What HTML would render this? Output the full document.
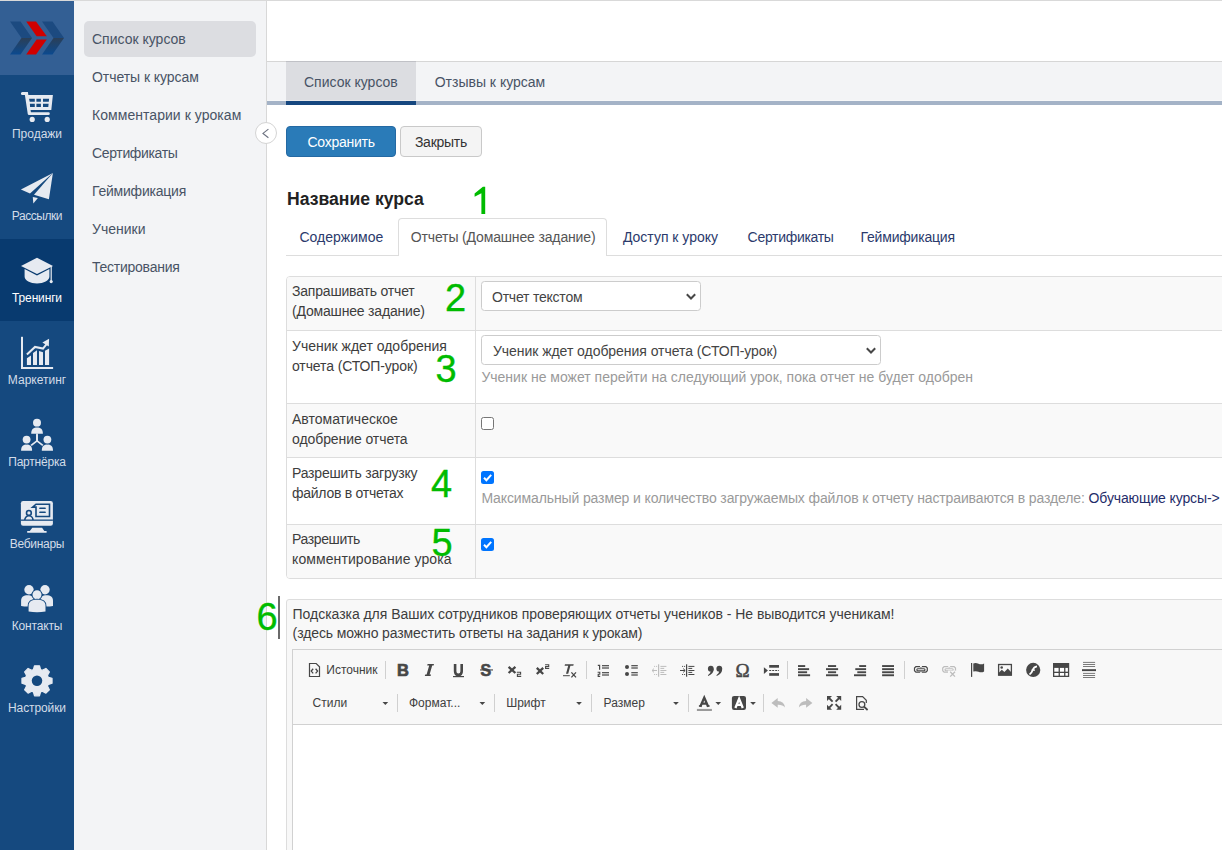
<!DOCTYPE html>
<html><head><meta charset="utf-8">
<style>
*{box-sizing:border-box;margin:0;padding:0}
html,body{width:1222px;height:850px;overflow:hidden;background:#fff;font-family:"Liberation Sans",sans-serif;color:#333}
.a{position:absolute;white-space:nowrap;line-height:1}
#topline{position:absolute;left:0;top:0;width:1222px;height:1px;background:#d9d9d9}
#side{position:absolute;left:0;top:1px;width:74px;height:849px;background:#15497f}
#logo{position:absolute;left:0;top:0;width:74px;height:74px;background:#335f94}
.si{position:absolute;left:0;width:74px;height:82px}
.si.act{background:#083a6f}
.si svg{position:absolute;left:0;top:0}
.si .t{position:absolute;left:0;width:74px;text-align:center;font-size:12px;line-height:12px;top:53px;color:#d3dce8}
.si.act .t{color:#fff}
#sub{position:absolute;left:74px;top:1px;width:193px;height:849px;background:#f3f4f6;border-right:1px solid #d8d8d8}
#sub .hl{position:absolute;left:10px;top:20px;width:172px;height:36px;background:#dcdde1;border-radius:5px}
#sub .it{position:absolute;left:18px;font-size:14px;color:#3f4756}
#collapse{position:absolute;left:255px;top:122px;width:22px;height:22px;border-radius:50%;background:#fff;border:1px solid #d4d4d4}
#tabbar{position:absolute;left:267px;top:61px;width:955px;height:44px;background:#f3f4f6;border-top:1px solid #d6d6d6}
#tabbar .line{position:absolute;left:0;top:39px;width:955px;height:4px;background:#a4b3c7}
#tabbar .strip{position:absolute;left:0;top:38px;width:955px;height:1px;background:#f7f8f9}
#tabbar .act{position:absolute;left:19px;top:-1px;width:130px;height:40px;background:#dcdde1;border-top:1px solid #c0c1c6}
#tabbar .actstrip{position:absolute;left:19px;top:38px;width:130px;height:1px;background:#e8e8e9}
#tabbar .actline{position:absolute;left:19px;top:39px;width:130px;height:4px;background:#15477f}
.btn{position:absolute;border-radius:4px;font-size:14px}
#save{left:286px;top:126px;width:110px;height:31px;background:#2a7bb8;border:1px solid #2469a3}
#close{left:400px;top:126px;width:82px;height:31px;background:#f4f4f4;border:1px solid #c9c9c9}
.green{position:absolute;color:#00bb00;font-size:38px;line-height:1}
#itabs{position:absolute;left:286px;top:255px;width:936px;height:1px;background:#dddddd}
#itab-act{position:absolute;left:398px;top:218px;width:209px;height:38px;background:#fff;border:1px solid #dddddd;border-bottom:none;border-radius:4px 4px 0 0}
.itab{position:absolute;font-size:14px;color:#2b3a6c}
#tbl{position:absolute;left:286px;top:276px;width:940px;height:303px;border:1px solid #dddddd;border-radius:4px;overflow:hidden}
.row{position:absolute;left:0;width:940px}
.row.g{background:#f9f9f9}
.row.b{border-top:1px solid #dddddd}
#coldiv{position:absolute;left:188px;top:0;width:1px;height:303px;background:#dddddd}
.lbl{position:absolute;left:5px;font-size:14px;color:#333}
.sel{position:absolute;background:#fff;border:1px solid #cccccc;border-radius:3.5px}
.help{position:absolute;font-size:14px;color:#999}
.cb{position:absolute;width:13px;height:13px;border-radius:2.5px}
.cb.off{border:1px solid #767676;background:#fff}
.cb.on{background:#0075ff}
#hint{position:absolute;left:286px;top:599px;width:940px;height:260px;background:#f8f8f8;border:1px solid #dddddd;border-radius:3px}
#editor{position:absolute;left:292px;top:649px;width:935px;height:210px;border:1px solid #d1d1d1;background:#fff}
#toolbar{position:absolute;left:0;top:0;width:935px;height:75px;background:#f8f8f8;border-bottom:1px solid #d1d1d1}
.tb{position:absolute;font-size:12px;color:#333}
.sep{position:absolute;width:1px;background:#d0d0d0}
svg.ic{position:absolute;overflow:visible}
</style></head><body>
<div id="topline"></div>
<div id="side">
  <div class="si" style="top:74px"><svg width="74" height="82" viewBox="0 0 74 82">
   <g fill="#e6eaf1">
   <path d="M22.4 17 H27.9 L31.2 39.2 H27.8 L24.9 20 H22.4 A1.5 1.5 0 0 1 22.4 17Z"/>
   <path fill-rule="evenodd" d="M26 20.1 H52.9 L51.3 35 H28.3Z M29.1 23.7 H34.8 V26.7 H29.5Z M36.4 23.7 H40.9 V26.7 H36.4Z M43 23.7 H49.1 L48.8 26.7 H43Z M29.6 28.8 H34.8 V31.9 H30Z M36.4 28.8 H40.9 V31.9 H36.4Z M43 28.8 H48.6 L48.3 31.9 H43Z"/>
   <path d="M28 37.3 H48.4 A1.4 1.4 0 0 1 48.4 40.1 H28.3Z"/>
   <circle cx="32.2" cy="44.4" r="2.6"/><circle cx="47.2" cy="44.4" r="2.6"/>
   </g></svg><div class="t">Продажи</div></div>
<div class="si" style="top:156px"><svg width="74" height="82" viewBox="0 0 74 82"><g fill="#e6eaf1">
   <polygon points="52.9,16 20.9,32.5 30,36.5 46.7,21.5"/>
   <polygon points="52.9,16 34,37.8 48.9,42.2"/>
   <polygon points="32.8,39.9 37.9,41 33.3,46.6"/>
   </g></svg><div class="t" style="letter-spacing:-0.45px">Рассылки</div></div>
<div class="si act" style="top:238px"><svg width="74" height="82" viewBox="0 0 74 82"><g fill="#e6eaf1">
   <polygon points="37,18.8 53,26.9 37,35.1 21,26.9"/>
   <path d="M24.6 30 L37 36.6 L49.4 30 V37.6 C49.4 41.6 43.6 44.5 37 44.5 C30.4 44.5 24.6 41.6 24.6 37.6 Z"/>
   <rect x="50.6" y="27" width="1.2" height="15.5"/><circle cx="51.2" cy="42.6" r="1.6"/>
   </g></svg><div class="t" style="letter-spacing:-0.15px">Тренинги</div></div>
<div class="si" style="top:320px"><svg width="74" height="82" viewBox="0 0 74 82"><g fill="#e6eaf1">
   <rect x="21" y="15.8" width="2" height="32.2"/><rect x="21" y="46" width="32.1" height="2"/>
   <polygon points="26.9,37.3 31,34.4 31,44 26.9,44"/>
   <polygon points="33,32.1 37,29.2 37,44 33,44"/>
   <polygon points="39,30.1 43,31.2 43,44 39,44"/>
   <polygon points="45,29.7 49.1,27.4 49.1,44 45,44"/>
   <polygon points="49.1,17.8 42.4,21.6 48.8,25.6"/>
   </g>
   <polyline points="26.9,33.5 35,25.9 43,27.6 46.8,22.8" fill="none" stroke="#e6eaf1" stroke-width="2"/>
   </svg><div class="t">Маркетинг</div></div>
<div class="si" style="top:402px"><svg width="74" height="82" viewBox="0 0 74 82">
   <path d="M37 30 V37.8 L30.2 43.2 M37 37.8 L43.8 43.2" stroke="#e6eaf1" stroke-width="1.7" fill="none"/>
   <g fill="#e6eaf1" stroke="#15497f" stroke-width="1.6" style="paint-order:stroke">
   <circle cx="37" cy="19.7" r="4"/><path d="M31.2 30.8 C31.2 25.900000000000002 33.8 24.6 37.05 24.6 C40.3 24.6 42.9 25.900000000000002 42.9 30.8Z"/>
   <path d="M21.1 47.7 C21.1 42.9 23.700000000000003 41.6 26.6 41.6 C29.5 41.6 32.1 42.9 32.1 47.7Z"/><circle cx="26.6" cy="36.6" r="3.9"/>
   <path d="M41.8 47.7 C41.8 42.9 44.4 41.6 47.4 41.6 C50.4 41.6 53 42.9 53 47.7Z"/><circle cx="47.4" cy="36.6" r="3.9"/>
   </g><rect x="36.15" y="30.5" width="1.7" height="7.6" fill="#e6eaf1"/></svg><div class="t" style="letter-spacing:-0.2px">Партнёрка</div></div>
<div class="si" style="top:484px"><svg width="74" height="82" viewBox="0 0 74 82">
   <rect x="20.9" y="16" width="32" height="24.8" rx="2.2" fill="#e6eaf1"/>
   <rect x="20.9" y="34.5" width="32" height="1.3" fill="#15497f"/>
   <path d="M32.3 42.8 H42.1 L44.3 46 H46.6 V47.8 H27.2 V46 H29.8Z" fill="#e6eaf1"/>
   <path d="M36 19.2 h13.5 v12.3 h-13.5 v-9.4 h-3.4 z" fill="none" stroke="#15497f" stroke-width="1.6" stroke-linejoin="miter"/>
   <rect x="39.2" y="22.6" width="6.6" height="1.5" rx="0.7" fill="#15497f"/><rect x="39.2" y="26.6" width="6.6" height="1.5" rx="0.7" fill="#15497f"/>
   <circle cx="28.9" cy="27.9" r="2.4" fill="none" stroke="#15497f" stroke-width="1.6"/>
   <path d="M24.8 35 a4.1 4.3 0 0 1 8.2 0" fill="none" stroke="#15497f" stroke-width="1.6"/>
   </svg><div class="t" style="letter-spacing:-0.3px">Вебинары</div></div>
<div class="si" style="top:566px"><svg width="74" height="82" viewBox="0 0 74 82"><g fill="#e6eaf1">
   <circle cx="29" cy="22.8" r="4.7"/><circle cx="45" cy="22.8" r="4.7"/>
   <path d="M21.1 39.0 V33.9 C21.1 29.567999999999998 23.68 28.2 27.55 28.2 C31.42 28.2 34 29.567999999999998 34 33.9 V39.0 Q27.55 40.2 21.1 39.0Z"/><path d="M40 39.0 V33.9 C40 29.567999999999998 42.6 28.2 46.5 28.2 C50.4 28.2 53 29.567999999999998 53 33.9 V39.0 Q46.5 40.2 40 39.0Z"/>
   </g><g fill="#e6eaf1" stroke="#15497f" stroke-width="1.9" style="paint-order:stroke">
   <circle cx="37" cy="27.7" r="4.5"/>
   <path d="M28.6 44.6 V39.0 C28.6 34.288 31.98 32.8 37.05 32.8 C42.12 32.8 45.5 34.288 45.5 39.0 V44.6 Q37.05 45.800000000000004 28.6 44.6Z"/>
   </g></svg><div class="t" style="letter-spacing:-0.18px">Контакты</div></div>
<div class="si" style="top:648px"><svg width="74" height="82" viewBox="0 0 74 82"><path fill="#e6eaf1" stroke="#e6eaf1" stroke-width="1.3" stroke-linejoin="round" d="M33.54 20.21 L34.58 16.79 L39.42 16.79 L40.46 20.21 L41.36 21.27 L42.75 21.15 L45.90 19.48 L49.32 22.90 L47.65 26.05 L47.53 27.44 L48.59 28.34 L52.01 29.38 L52.01 34.22 L48.59 35.26 L47.53 36.16 L47.65 37.55 L49.32 40.70 L45.90 44.12 L42.75 42.45 L41.36 42.33 L40.46 43.39 L39.42 46.81 L34.58 46.81 L33.54 43.39 L32.64 42.33 L31.25 42.45 L28.10 44.12 L24.68 40.70 L26.35 37.55 L26.47 36.16 L25.41 35.26 L21.99 34.22 L21.99 29.38 L25.41 28.34 L26.47 27.44 L26.35 26.05 L24.68 22.90 L28.10 19.48 L31.25 21.15 L32.64 21.27Z"/><circle cx="37" cy="31.8" r="5.25" fill="#15497f"/></svg><div class="t" style="letter-spacing:-0.1px">Настройки</div></div>
<div id="logo">
    <svg width="74" height="74" viewBox="0 0 74 74">
      <defs>
        <linearGradient id="bl" x1="0" y1="0" x2="0" y2="1">
          <stop offset="0" stop-color="#2b3f57"/><stop offset="1" stop-color="#0b4a90"/>
        </linearGradient>
      </defs>
      <polygon points="10,20.5 20.5,20.5 32,37 21.5,37" fill="#1c4a80"/>
      <polygon points="21.5,37 32,37 20.5,53.6 10,53.6" fill="url(#bl)"/>
      <polygon points="42,20.5 52.5,20.5 64,37 53.5,37" fill="#1c4a80"/>
      <polygon points="53.5,37 64,37 52.5,53.6 42,53.6" fill="url(#bl)"/>
      <polygon points="26.2,20.5 36,20.5 46.8,35.3 36.6,35.3" fill="#d00000"/>
      <polygon points="36.6,38.5 46.8,38.5 36,53.6 26.2,53.6" fill="#d00000"/>
    </svg>
  </div>
</div>
<div id="sub">
  <div class="hl"></div>
</div>
<div id="collapse"></div>
<div id="tabbar">
  <div class="strip"></div><div class="line"></div>
  <div class="act"></div><div class="actstrip"></div><div class="actline"></div>
</div>
<div id="save" class="btn"></div>
<div id="close" class="btn"></div>
<div id="itabs"></div>
<div id="itab-act"></div>
<div id="tbl">
  <div class="row g" style="top:0;height:54px"></div>
  <div class="row b" style="top:53px;height:73px"></div>
  <div class="row g b" style="top:126px;height:54px"></div>
  <div class="row b" style="top:180px;height:67px"></div>
  <div class="row g b" style="top:247px;height:56px"></div>
  <div id="coldiv"></div>
</div>

<div class="sel" style="left:481px;top:281px;width:220px;height:30px"></div>
<svg class="ic" style="left:0;top:0" width="1" height="1"><path d="M686.8 294.3 L691 298.5 L695.2 294.3" fill="none" stroke="#474747" stroke-width="2"/></svg>
<div class="sel" style="left:481px;top:335px;width:400px;height:30px"></div>
<svg class="ic" style="left:0;top:0" width="1" height="1"><path d="M866.8 348.3 L871 352.5 L875.2 348.3" fill="none" stroke="#474747" stroke-width="2"/></svg>
<div class="cb off" style="left:481px;top:417px"></div>
<div class="cb on" style="left:481px;top:471px"><svg width="13" height="13" style="position:absolute;left:0;top:0"><path d="M3 6.8 L5.4 9.2 L10.2 3.9" fill="none" stroke="#fff" stroke-width="2"/></svg></div>
<div class="cb on" style="left:481px;top:538px"><svg width="13" height="13" style="position:absolute;left:0;top:0"><path d="M3 6.8 L5.4 9.2 L10.2 3.9" fill="none" stroke="#fff" stroke-width="2"/></svg></div>
<div style="position:absolute;left:278px;top:596px;width:2px;height:43px;background:#6a6a6a"></div>
<svg class="ic" style="left:0;top:0" width="1" height="1"><path d="M268.4 129.1 L263 133.4 L268.4 137.7" fill="none" stroke="#6c7280" stroke-width="1.15"/></svg>
<div id="hint">
</div>
<div id="editor"><div id="toolbar"></div></div>
<svg id="tbicons" style="position:absolute;left:0;top:0" width="1222" height="850"><rect x="385.0" y="661" width="1" height="18" fill="#d0d0d0"/>
<rect x="586.0" y="661" width="1" height="18" fill="#d0d0d0"/>
<rect x="787.0" y="661" width="1" height="18" fill="#d0d0d0"/>
<rect x="904.0" y="661" width="1" height="18" fill="#d0d0d0"/>
<rect x="397.0" y="694" width="1" height="18" fill="#d0d0d0"/>
<rect x="494.0" y="694" width="1" height="18" fill="#d0d0d0"/>
<rect x="591.0" y="694" width="1" height="18" fill="#d0d0d0"/>
<rect x="688.0" y="694" width="1" height="18" fill="#d0d0d0"/>
<rect x="763.0" y="694" width="1" height="18" fill="#d0d0d0"/>
<path d="M309.5 663.5 H316.2 L319.5 666.8 V676.5 H309.5Z" fill="none" stroke="#474747" stroke-width="1.2"/>
<path d="M313.2 668.8 L311.2 671.1 L313.2 673.4 M315.6 668.8 L317.6 671.1 L315.6 673.4" fill="none" stroke="#474747" stroke-width="1.3"/>
<text x="397" y="676" font-family="Liberation Sans" font-weight="700" font-size="16.5" fill="#474747" stroke="#474747" stroke-width="0.7">B</text>
<path d="M427.6 664 H434 L433.6 665.6 H432.2 L429.6 674.4 H431 L430.6 676 H424.8 L425.2 674.4 H426.6 L429.2 665.6 H427.2Z" fill="#474747"/>
<path d="M455.1 664 V671.2 Q455.1 674.9 458.4 674.9 Q461.7 674.9 461.7 671.2 V664" fill="none" stroke="#474747" stroke-width="2.6"/>
<rect x="453" y="676" width="11" height="1.2" fill="#474747"/>
<text x="480.6" y="676" font-family="Liberation Sans" font-weight="700" font-size="16" fill="#474747" stroke="#474747" stroke-width="0.6">S</text>
<rect x="480" y="669.4" width="13" height="1.1" fill="#474747"/>
<path d="M508.6 666.9 L515.4 673 M515.4 666.9 L508.6 673" stroke="#474747" stroke-width="2.3"/>
<path d="M516.8 672.3 H520.6 V674.3 H517.4 V676.4 H521.2" fill="none" stroke="#474747" stroke-width="1.1"/>
<path d="M536.8 667.9 L543.2 674 M543.2 667.9 L536.8 674" stroke="#474747" stroke-width="2.3"/>
<path d="M545.1 664.8 H548.7 V666.6 H545.6 V668.5 H549.2" fill="none" stroke="#474747" stroke-width="1.1"/>
<path d="M565 664.3 H573.7 L573.3 665.8 H570.4 L568.2 673.8 H566 L568.2 665.8 H564.6Z" fill="#474747"/>
<rect x="563" y="675.2" width="6.8" height="1" fill="#474747"/>
<path d="M571.4 672.4 L576 677.4 M576 672.4 L571.4 677.4" stroke="#474747" stroke-width="1.3"/>
<path d="M597.8 665.4 H599.6 V669.8" fill="none" stroke="#474747" stroke-width="1.2"/>
<path d="M597.6 672.3 H599.8 V674.3 H598.2 V676.4 H600.2" fill="none" stroke="#474747" stroke-width="1.1"/>
<rect x="602" y="665.1" width="7" height="1.2" fill="#474747"/>
<rect x="602" y="667.4" width="7" height="1.2" fill="#474747"/>
<rect x="602" y="672.1" width="7" height="1.2" fill="#474747"/>
<rect x="602" y="674.4" width="7" height="1.2" fill="#474747"/>
<circle cx="627" cy="666.9" r="2" fill="#474747"/><circle cx="627" cy="674.1" r="2" fill="#474747"/>
<rect x="631.3" y="665.1" width="6.5" height="1.2" fill="#474747"/>
<rect x="631.3" y="667.4" width="6.5" height="1.2" fill="#474747"/>
<rect x="631.3" y="672.1" width="6.5" height="1.2" fill="#474747"/>
<rect x="631.3" y="674.4" width="6.5" height="1.2" fill="#474747"/>
<rect x="658.0" y="664.3" width="1.2" height="12.4" fill="#bdbdbd"/><rect x="660.4" y="665.9" width="6" height="1" fill="#bdbdbd"/><rect x="660.4" y="667.9" width="3.8" height="1" fill="#bdbdbd"/><rect x="660.4" y="670.0" width="6" height="1" fill="#bdbdbd"/><rect x="660.4" y="671.9" width="3.8" height="1" fill="#bdbdbd"/><rect x="660.4" y="674.0" width="6" height="1" fill="#bdbdbd"/><rect x="654.1" y="665.9" width="1" height="1" fill="#bdbdbd"/><rect x="656.1" y="665.9" width="1" height="1" fill="#bdbdbd"/><rect x="654.1" y="674.0" width="1" height="1" fill="#bdbdbd"/><rect x="656.1" y="674.0" width="1" height="1" fill="#bdbdbd"/><path d="M652 670.5 H657" stroke="#bdbdbd" stroke-width="1"/><path d="M654 668.6 L652 670.5 L654 672.4" fill="none" stroke="#bdbdbd" stroke-width="1"/>
<rect x="686.0" y="664.3" width="1.2" height="12.4" fill="#474747"/><rect x="688.4" y="665.9" width="6" height="1" fill="#474747"/><rect x="688.4" y="667.9" width="3.8" height="1" fill="#474747"/><rect x="688.4" y="670.0" width="6" height="1" fill="#474747"/><rect x="688.4" y="671.9" width="3.8" height="1" fill="#474747"/><rect x="688.4" y="674.0" width="6" height="1" fill="#474747"/><rect x="682.1" y="665.9" width="1" height="1" fill="#474747"/><rect x="684.1" y="665.9" width="1" height="1" fill="#474747"/><rect x="682.1" y="674.0" width="1" height="1" fill="#474747"/><rect x="684.1" y="674.0" width="1" height="1" fill="#474747"/><path d="M680 670.5 H685" stroke="#474747" stroke-width="1"/><path d="M683.2 668.6 L685.2 670.5 L683.2 672.4" fill="none" stroke="#474747" stroke-width="1"/>
<circle cx="710.8" cy="668.7" r="2.9" fill="#474747"/><path d="M713.6 668.4 Q714.1 673.4 708.3 675.9 L707.9 675.3 Q711.1 672.8 710.8 670.6Z" fill="#474747"/>
<circle cx="719.3" cy="668.7" r="2.9" fill="#474747"/><path d="M722.1 668.4 Q722.6 673.4 716.8 675.9 L716.4 675.3 Q719.6 672.8 719.3 670.6Z" fill="#474747"/>
<text x="735.6" y="676.7" font-family="Liberation Serif" font-weight="400" font-size="19" fill="#474747" stroke="#474747" stroke-width="0.5">Ω</text>
<polygon points="763.9,667.2 767.9,670.6 763.9,674" fill="#474747"/>
<rect x="769.2" y="665" width="9.8" height="2.7" fill="#474747"/><rect x="769.2" y="673.1" width="9.8" height="2.7" fill="#474747"/>
<path d="M769.2 670.5 H779" stroke="#474747" stroke-width="1" stroke-dasharray="2 1"/>
<rect x="798" y="665.1" width="7.2000000000000455" height="1.9" fill="#474747"/><rect x="798" y="668.2" width="11.100000000000023" height="1.9" fill="#474747"/><rect x="798" y="671.3" width="9.100000000000023" height="1.9" fill="#474747"/><rect x="798" y="674.3" width="12.100000000000023" height="1.9" fill="#474747"/>
<rect x="828" y="665.1" width="8.100000000000023" height="1.9" fill="#474747"/><rect x="826" y="668.2" width="12.100000000000023" height="1.9" fill="#474747"/><rect x="828" y="671.3" width="8.100000000000023" height="1.9" fill="#474747"/><rect x="826" y="674.3" width="12.100000000000023" height="1.9" fill="#474747"/>
<rect x="859.2" y="665.1" width="6.899999999999977" height="1.9" fill="#474747"/><rect x="855.3" y="668.2" width="10.800000000000068" height="1.9" fill="#474747"/><rect x="857.3" y="671.3" width="8.800000000000068" height="1.9" fill="#474747"/><rect x="854" y="674.3" width="12.100000000000023" height="1.9" fill="#474747"/>
<rect x="882.1" y="665.1" width="11.899999999999977" height="1.9" fill="#474747"/><rect x="882.1" y="668.2" width="11.899999999999977" height="1.9" fill="#474747"/><rect x="882.1" y="671.3" width="11.899999999999977" height="1.9" fill="#474747"/><rect x="882.1" y="674.3" width="11.899999999999977" height="1.9" fill="#474747"/>
<path d="M920.0 666.6 H915.9 L914.5 668 V670.7 L915.9 672.1 H920.0 M921.9 666.6 H925.9 L927.3 668 V670.7 L925.9 672.1 H921.9" fill="none" stroke="#474747" stroke-width="1.2"/><rect x="916.8" y="668.8" width="8.2" height="1.9" rx="0.95" fill="none" stroke="#474747" stroke-width="1.1"/><rect x="920.4" y="667.2" width="1.1" height="1" fill="#474747"/><rect x="920.4" y="671.2" width="1.1" height="1" fill="#474747"/>
<path d="M948.2 666.6 H944.1 L942.7 668 V670.7 L944.1 672.1 H948.2 M950.1 666.6 H954.1 L955.5 668 V670.7 L954.1 672.1 H950.1" fill="none" stroke="#bdbdbd" stroke-width="1.2"/><rect x="945.0" y="668.8" width="8.2" height="1.9" rx="0.95" fill="none" stroke="#bdbdbd" stroke-width="1.1"/><rect x="948.6" y="667.2" width="1.1" height="1" fill="#bdbdbd"/><rect x="948.6" y="671.2" width="1.1" height="1" fill="#bdbdbd"/>
<rect x="948" y="670.6" width="8.5" height="7" fill="#f8f8f8"/>
<path d="M950.2 671.8 L955 676.6 M955 671.8 L950.2 676.6" stroke="#bdbdbd" stroke-width="1.3"/>
<rect x="971" y="663" width="1.2" height="13.9" fill="#474747"/>
<path d="M973.3 663.4 Q976 662.6 978.5 663.8 Q981.5 665 984.1 663.4 V671.4 Q981.5 673 978.5 671.8 Q976 670.6 973.3 671.6Z" fill="#474747"/>
<rect x="998.6" y="664.5" width="12.8" height="10.7" fill="none" stroke="#474747" stroke-width="1.3"/>
<circle cx="1001.7" cy="667.5" r="1.3" fill="#474747"/>
<path d="M999 675.2 V672.6 L1001.8 669.8 L1004.4 672 L1007.8 668.6 L1011 672 V675.2Z" fill="#474747"/>
<circle cx="1033.2" cy="669.9" r="7.1" fill="#474747"/>
<path d="M1029.5 674.6 Q1031.6 673.3 1032.6 670.3 Q1033.8 666.6 1037 666.3" fill="none" stroke="#fff" stroke-width="1.8"/>
<path d="M1031.5 670.1 H1035" stroke="#fff" stroke-width="1.2"/>
<rect x="1053" y="663" width="16.2" height="14" fill="#474747"/>
<rect x="1054.3" y="667.9" width="4.2999999999999545" height="3.800000000000068" fill="#fff"/>
<rect x="1054.3" y="673" width="4.2999999999999545" height="2.7000000000000455" fill="#fff"/>
<rect x="1059.9" y="667.9" width="4.199999999999818" height="3.800000000000068" fill="#fff"/>
<rect x="1059.9" y="673" width="4.199999999999818" height="2.7000000000000455" fill="#fff"/>
<rect x="1065.4" y="667.9" width="2.5" height="3.800000000000068" fill="#fff"/>
<rect x="1065.4" y="673" width="2.5" height="2.7000000000000455" fill="#fff"/>
<rect x="1083" y="661.9" width="12.1" height="1" fill="#7a7a7a"/>
<rect x="1083" y="664.0" width="12.1" height="1" fill="#7a7a7a"/>
<rect x="1083" y="666.0" width="12.1" height="1" fill="#7a7a7a"/>
<rect x="1083" y="672.9" width="12.1" height="1" fill="#7a7a7a"/>
<rect x="1083" y="675.0" width="12.1" height="1" fill="#7a7a7a"/>
<rect x="1083" y="677.0" width="12.1" height="1" fill="#7a7a7a"/>
<rect x="1082" y="669.2" width="14" height="1.9" fill="#474747"/>
<polygon points="382.5,702 388.2,702 385.35,705" fill="#474747"/>
<polygon points="479.5,702 485.2,702 482.35,705" fill="#474747"/>
<polygon points="576.2,702 581.9000000000001,702 579.0500000000001,705" fill="#474747"/>
<polygon points="673.1,702 678.8000000000001,702 675.95,705" fill="#474747"/>
<polygon points="715.4,702 721.1,702 718.25,705" fill="#474747"/>
<polygon points="750.2,702 755.9000000000001,702 753.0500000000001,705" fill="#474747"/>
<path d="M700.3 706.7 L704.25 697.6 L708.2 706.7 M701.9 703.7 H706.6" fill="none" stroke="#474747" stroke-width="2.3" stroke-linejoin="miter"/><path d="M698.9 706 H701.7 M706.8 706 H709.6" stroke="#474747" stroke-width="1.4"/>
<rect x="696.9" y="708.9" width="15" height="2.1" fill="#9a9a9a"/>
<rect x="731.9" y="695.9" width="14.1" height="14.1" rx="2.2" fill="#474747"/>
<path d="M735.4 708 L739.1 698.8 L742.8 708 M736.9 704.9 H741.3" fill="none" stroke="#fff" stroke-width="2.3"/>
<path d="M777.7 698.1 L771.4 702.9 L777.7 707.8 V704.8 Q782.6 704.6 784.9 707.5 Q784.4 701.2 777.7 701Z" fill="#bdbdbd"/>
<path d="M806.1 698.1 L812.4 702.9 L806.1 707.8 V704.8 Q801.2 704.6 798.9 707.5 Q799.4 701.2 806.1 701Z" fill="#bdbdbd"/>
<polygon points="827,696 832,696 827,701" fill="#474747"/><path d="M829 698 L832.6 701.6" stroke="#474747" stroke-width="1.9"/><polygon points="841.2,696 836.2,696 841.2,701" fill="#474747"/><path d="M839.2 698 L835.6 701.6" stroke="#474747" stroke-width="1.9"/><polygon points="827,709.8 832,709.8 827,704.8" fill="#474747"/><path d="M829 707.8 L832.6 704.1999999999999" stroke="#474747" stroke-width="1.9"/><polygon points="841.2,709.8 836.2,709.8 841.2,704.8" fill="#474747"/><path d="M839.2 707.8 L835.6 704.1999999999999" stroke="#474747" stroke-width="1.9"/>
<path d="M856.6 696.6 H862.6 L866.3 700.3 V709.3 H856.6Z" fill="none" stroke="#474747" stroke-width="1.2"/>
<rect x="864" y="703" width="4" height="7" fill="#f8f8f8"/>
<circle cx="861.9" cy="704.5" r="2.9" fill="#f8f8f8" stroke="#474747" stroke-width="1.3"/>
<path d="M864 706.6 L867.6 710" stroke="#474747" stroke-width="1.8"/></svg>
<div class="a" style="left:92px;top:32.15px;font-size:14px;color:#485365;font-weight:400;">Список курсов</div>
<div class="a" style="left:92px;top:70.15px;font-size:14px;color:#485365;font-weight:400;letter-spacing:-0.05px;">Отчеты к курсам</div>
<div class="a" style="left:92px;top:108.15px;font-size:14px;color:#485365;font-weight:400;letter-spacing:0.05px;">Комментарии к урокам</div>
<div class="a" style="left:92px;top:146.15px;font-size:14px;color:#485365;font-weight:400;letter-spacing:-0.35px;">Сертификаты</div>
<div class="a" style="left:92px;top:184.15px;font-size:14px;color:#485365;font-weight:400;letter-spacing:-0.22px;">Геймификация</div>
<div class="a" style="left:92px;top:222.15px;font-size:14px;color:#485365;font-weight:400;">Ученики</div>
<div class="a" style="left:92px;top:260.15px;font-size:14px;color:#485365;font-weight:400;letter-spacing:-0.25px;">Тестирования</div>
<div class="a" style="left:304px;top:75.05px;font-size:14px;color:#485365;font-weight:400;">Список курсов</div>
<div class="a" style="left:434.7px;top:75.05px;font-size:14px;color:#485365;font-weight:400;">Отзывы к курсам</div>
<div class="a" style="left:307.5px;top:134.95px;font-size:14px;color:#fff;font-weight:400;letter-spacing:-0.25px;">Сохранить</div>
<div class="a" style="left:414.9px;top:134.95px;font-size:14px;color:#333;font-weight:400;letter-spacing:-0.25px;">Закрыть</div>
<div class="a" style="left:287px;top:191.00px;font-size:17.6px;color:#222;font-weight:700;">Название курса</div>
<div class="a" style="left:299.5px;top:229.85px;font-size:14px;color:#2b3a6c;font-weight:400;">Содержимое</div>
<div class="a" style="left:410.8px;top:229.85px;font-size:14px;color:#555;font-weight:400;letter-spacing:-0.15px;">Отчеты (Домашнее задание)</div>
<div class="a" style="left:622.9px;top:229.85px;font-size:14px;color:#2b3a6c;font-weight:400;">Доступ к уроку</div>
<div class="a" style="left:747.6px;top:229.85px;font-size:14px;color:#2b3a6c;font-weight:400;letter-spacing:-0.3px;">Сертификаты</div>
<div class="a" style="left:860.6px;top:229.85px;font-size:14px;color:#2b3a6c;font-weight:400;letter-spacing:-0.2px;">Геймификация</div>
<div class="a" style="left:292px;top:284.15px;font-size:14px;color:#3d3d3d;font-weight:400;letter-spacing:-0.19px;">Запрашивать отчет</div>
<div class="a" style="left:292px;top:304.15px;font-size:14px;color:#3d3d3d;font-weight:400;letter-spacing:-0.18px;">(Домашнее задание)</div>
<div class="a" style="left:292px;top:338.95px;font-size:14px;color:#3d3d3d;font-weight:400;">Ученик ждет одобрения</div>
<div class="a" style="left:292px;top:358.95px;font-size:14px;color:#3d3d3d;font-weight:400;letter-spacing:-0.11px;">отчета (СТОП-урок)</div>
<div class="a" style="left:292px;top:411.75px;font-size:14px;color:#3d3d3d;font-weight:400;">Автоматическое</div>
<div class="a" style="left:292px;top:431.75px;font-size:14px;color:#3d3d3d;font-weight:400;letter-spacing:-0.08px;">одобрение отчета</div>
<div class="a" style="left:292px;top:465.55px;font-size:14px;color:#3d3d3d;font-weight:400;letter-spacing:-0.19px;">Разрешить загрузку</div>
<div class="a" style="left:292px;top:485.55px;font-size:14px;color:#3d3d3d;font-weight:400;letter-spacing:-0.26px;">файлов в отчетах</div>
<div class="a" style="left:292px;top:532.45px;font-size:14px;color:#3d3d3d;font-weight:400;letter-spacing:-0.38px;">Разрешить</div>
<div class="a" style="left:292px;top:552.45px;font-size:14px;color:#3d3d3d;font-weight:400;letter-spacing:0.1px;">комментирование урока</div>
<div class="a" style="left:492px;top:290.35px;font-size:14px;color:#444;font-weight:400;letter-spacing:-0.22px;">Отчет текстом</div>
<div class="a" style="left:493px;top:344.05px;font-size:14px;color:#444;font-weight:400;letter-spacing:-0.05px;">Ученик ждет одобрения отчета (СТОП-урок)</div>
<div class="a" style="left:481.4px;top:370.15px;font-size:14px;color:#9a9a9a;font-weight:400;">Ученик не может перейти на следующий урок, пока отчет не будет одобрен</div>
<div class="a" style="left:481.4px;top:491.15px;font-size:14px;color:#9a9a9a;font-weight:400;letter-spacing:-0.12px;">Максимальный размер и количество загружаемых файлов к отчету настраиваются в разделе: <span style="color:#1f2d6a">Обучающие курсы-&gt;</span></div>
<div class="a" style="left:292.6px;top:606.75px;font-size:14px;color:#3d3d3d;font-weight:400;letter-spacing:-0.04px;">Подсказка для Ваших сотрудников проверяющих отчеты учеников - Не выводится ученикам!</div>
<div class="a" style="left:292.6px;top:626.15px;font-size:14px;color:#3d3d3d;font-weight:400;letter-spacing:-0.11px;">(здесь можно разместить ответы на задания к урокам)</div>
<div class="a" style="left:326.3px;top:664.34px;font-size:12px;color:#404040;font-weight:400;">Источник</div>
<div class="a" style="left:312.6px;top:697.04px;font-size:12px;color:#404040;font-weight:400;">Стили</div>
<div class="a" style="left:409px;top:697.04px;font-size:12px;color:#404040;font-weight:400;">Формат...</div>
<div class="a" style="left:506.2px;top:697.04px;font-size:12px;color:#404040;font-weight:400;">Шрифт</div>
<div class="a" style="left:603.6px;top:697.04px;font-size:12px;color:#404040;font-weight:400;">Размер</div>
<div class="a" style="left:445px;top:279.23px;font-size:38px;color:#00bb00;font-weight:400;-webkit-text-stroke:0.35px #00bb00;">2</div>
<div class="a" style="left:435.5px;top:349.83px;font-size:38px;color:#00bb00;font-weight:400;-webkit-text-stroke:0.35px #00bb00;">3</div>
<div class="a" style="left:431px;top:464.83px;font-size:38px;color:#00bb00;font-weight:400;-webkit-text-stroke:0.35px #00bb00;">4</div>
<div class="a" style="left:431.5px;top:523.83px;font-size:38px;color:#00bb00;font-weight:400;-webkit-text-stroke:0.35px #00bb00;">5</div>
<div class="a" style="left:256.5px;top:597.83px;font-size:38px;color:#00bb00;font-weight:400;-webkit-text-stroke:0.35px #00bb00;">6</div>
<svg class="ic" style="left:0;top:0" width="1" height="1"><polygon points="482.9,186.8 485.2,186.8 485.2,213.9 481.4,213.9 481.4,193.3 474.6,196.8 474.6,193.5" fill="#00bb00"/></svg>
</body></html>
